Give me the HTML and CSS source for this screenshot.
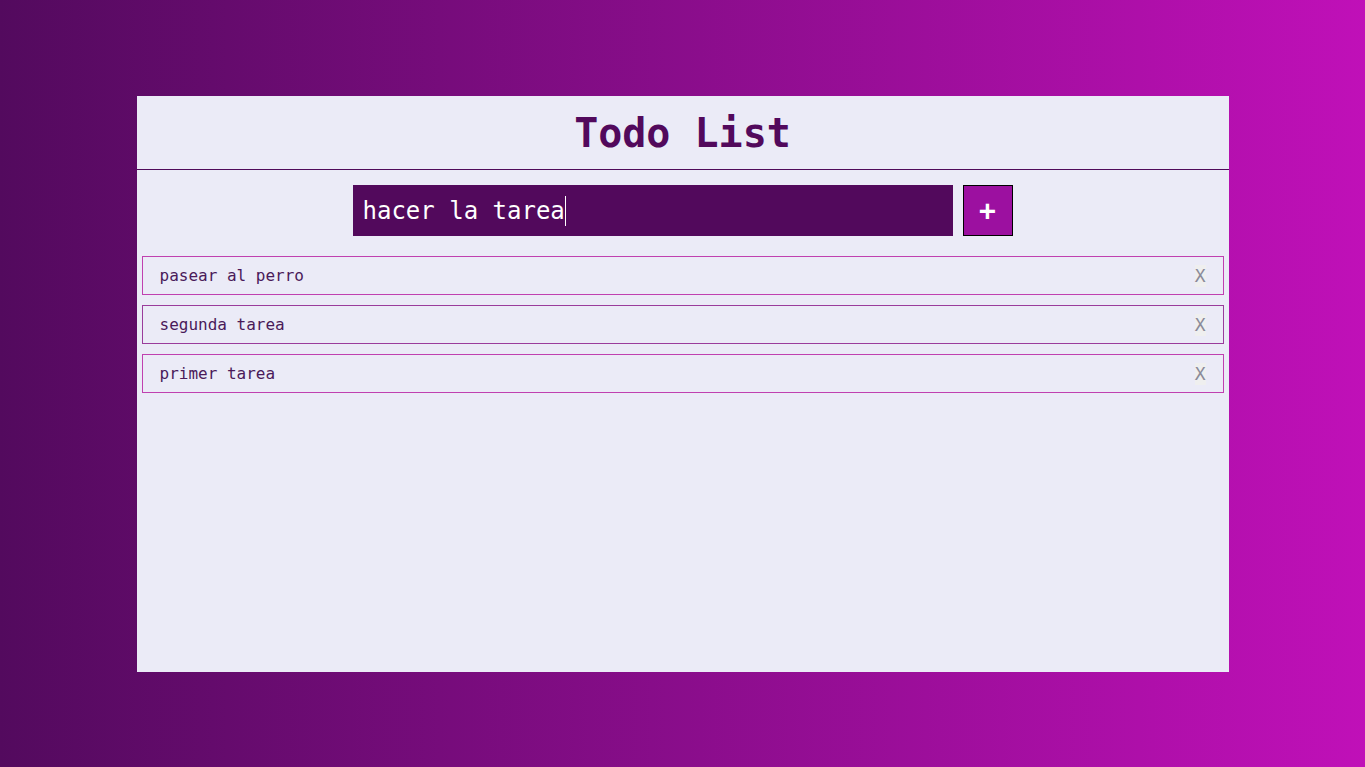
FILE: index.html
```html
<!DOCTYPE html>
<html lang="es">
<head>
<meta charset="utf-8">
<title>Todo List</title>
<link rel="stylesheet" href="styles.css">
</head>
<body>
<main class="app">
  <header class="app-header">
    <h1 class="title">Todo List</h1>
  </header>
  <form class="todo-form">
    <div class="todo-input">hacer la tarea<span class="caret"></span></div>
    <button type="button" class="add-btn">+</button>
  </form>
  <ul class="todo-list">
    <li class="todo-item"><span class="todo-text">pasear al perro</span><button type="button" class="del-btn">X</button></li>
    <li class="todo-item todo-item--hover"><span class="todo-text">segunda tarea</span><button type="button" class="del-btn">X</button></li>
    <li class="todo-item"><span class="todo-text">primer tarea</span><button type="button" class="del-btn">X</button></li>
  </ul>
</main>
</body>
</html>
```
FILE: styles.css
```css
* { box-sizing: border-box; }
html, body { height: 100%; }
body {
  margin: 0;
  background: linear-gradient(to right, #530a5e 0%, #c010b8 100%);
  font-family: "DejaVu Sans Mono", "Liberation Mono", monospace;
  padding-top: 96px;
}
.app {
  width: 1092px;
  height: 576px;
  margin: 0 auto;
  background: #ebebf7;
}
.app-header {
  border-bottom: 1px solid #4f0a5a;
  height: 74px;
  display: flex;
  align-items: center;
  justify-content: center;
}
.title {
  margin: 0;
  font-size: 40px;
  font-weight: bold;
  color: #52095c;
  line-height: 1;
}
.todo-form {
  display: flex;
  justify-content: center;
  gap: 10px;
  margin-top: 15px;
}
.todo-input {
  width: 600px;
  height: 51px;
  background: #52095c;
  color: #ffffff;
  font-size: 24px;
  padding: 0 10px;
  display: flex;
  align-items: center;
}
.caret {
  display: inline-block;
  width: 1px;
  height: 30px;
  background: #ffffff;
}
.add-btn {
  width: 50px;
  height: 51px;
  background: #9c10a0;
  border: 1px solid #000;
  color: #fff;
  font-family: inherit;
  font-size: 28px;
  font-weight: bold;
  padding: 0;
}
.todo-list {
  list-style: none;
  margin: 20px 5px 0;
  padding: 0;
  display: flex;
  flex-direction: column;
  gap: 10px;
}
.todo-item {
  height: 39px;
  border: 1px solid #c040b0;
  display: flex;
  align-items: center;
  justify-content: space-between;
  padding: 0 17px;
}
.todo-item--hover {
  border-color: #9a3c9c;
}
.todo-text {
  font-size: 16px;
  color: #4a1a5a;
}
.del-btn {
  background: #efefef;
  border: none;
  padding: 0;
  font-family: inherit;
  font-size: 18px;
  line-height: 22px;
  color: #8a8a9a;
}
```
